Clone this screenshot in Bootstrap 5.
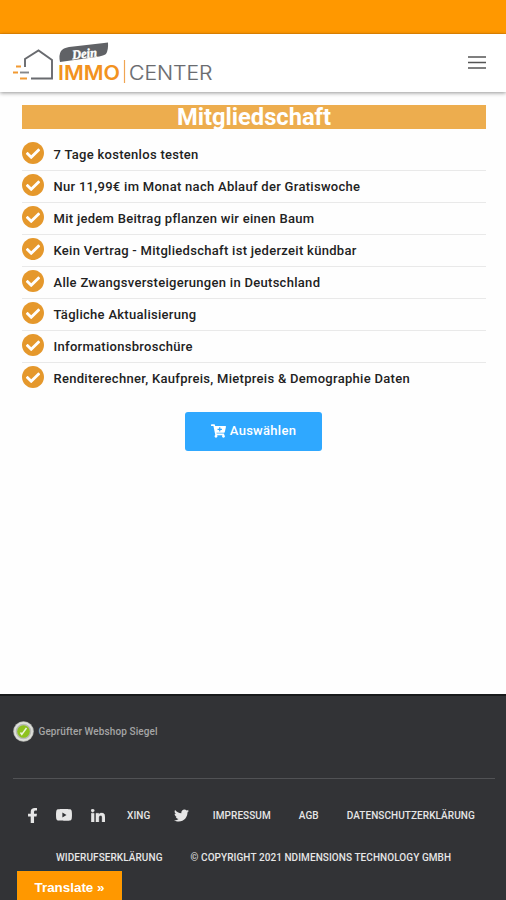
<!DOCTYPE html>
<html lang="de">
<head>
<meta charset="utf-8">
<meta name="viewport" content="width=device-width, initial-scale=1">
<title>Dein Immo Center – Mitgliedschaft</title>
<link href="https://cdn.jsdelivr.net/npm/bootstrap@5.3.0/dist/css/bootstrap.min.css" rel="stylesheet">
<script src="https://cdn.jsdelivr.net/npm/bootstrap@5.3.0/dist/js/bootstrap.bundle.min.js" defer></script>
<style>
body{font-family:Roboto,"Liberation Sans",sans-serif;color:#222;height:900px;overflow:hidden;background:#fefefe}
.topbar{height:34px;background:#ff9800;border-bottom:1px solid #f08c00}
.site-nav{height:58px;padding:0 20px 0 12px;background:#fff;box-shadow:0 1px 4px rgba(0,0,0,.42)}
.site-nav .navbar-toggler{width:18px;height:14px;margin-top:-3px}
.offer{padding:13px 20px 0 22px}
.offer-title{height:24px;line-height:25px;font-size:23.7px;font-weight:700;background:#edad4e}
.benefits{padding-top:10px}
.benefits .list-group-item{height:31.95px;padding:0;border-width:0 0 1px;border-color:#e9e9e9;background:none;color:#222;font-size:13px;font-weight:500;line-height:16px;letter-spacing:.29px}
.benefits .list-group-item:last-child{border:0}
.benefits svg{width:22px;height:22px;margin:0 9.5px 3px 0;flex:none}
.benefits span{white-space:nowrap;padding-top:1px}
.btn-choose{width:137px;height:39px;margin-top:17px;margin-right:1px;background:#2fa8ff;color:#fff;font-size:13px;font-weight:500;letter-spacing:.28px;border-radius:3px;padding:0}
.btn-choose:hover{background:#1c98f0;color:#fff}
.site-footer{height:206px;background:#323336;border-top:2px solid #191b1c;padding:24px 11px 0 13px;color:#e6e6e6}
.seal{height:22px;font-size:10px;font-weight:500;color:#a5a5a5;letter-spacing:.1px}
.divide{height:1px;background:#515255;margin-top:36px}
.foot-links{font-size:10px;font-weight:500;line-height:14px;white-space:nowrap;letter-spacing:.07px}
.foot-links a{color:#e6e6e6;text-decoration:none}
.foot-links svg{display:block}
.row-a{padding-left:15px;height:16px;margin-top:29px}
.row-a svg{margin-top:-2px}
.row-b{padding-left:43px;height:16px;margin-top:26px}
.translate{left:17px;bottom:0;width:105px;height:29px;background:#ff9800;color:#fff;font:700 13.4px/33px "Liberation Sans",sans-serif;box-shadow:0 0 0 1px #223744}
</style>
</head>
<body class="d-flex flex-column position-relative">
<div class="topbar flex-shrink-0"></div>
<nav class="site-nav navbar flex-shrink-0 d-flex justify-content-between align-items-center position-relative">
  <a class="navbar-brand p-0 m-0" href="#" aria-label="Dein Immo Center">
    <svg class="d-block" width="202" height="50" viewBox="12 38 202 50">
      <path d="M25 67V59L38.500 50.500L52 60V78.500H31" fill="none" stroke="#696b6f" stroke-width="1.900"/>
      <path d="M16 66.500H21M13 72.500H18M20 78.500H27" stroke="#f29a32" stroke-width="1.900"/>
      <path d="M20 72.500H29" stroke="#85878a" stroke-width="1.900"/>
      <path d="M61 51Q63 48 69 47L104 43L108 42.500Q108.500 50 106 54Q103 56 96 57L60 62Q58.500 55 61 51Z" fill="#606266"/>
      <text x="72" y="58" transform="rotate(-6 84 54)" textLength="25" lengthAdjust="spacingAndGlyphs" font-family="Liberation Serif,serif" font-size="13" font-weight="700" font-style="italic" fill="#fff" stroke="#fff" stroke-width=".4">Dein</text>
      <text x="58" y="79.500" textLength="62" lengthAdjust="spacingAndGlyphs" font-family="Inter,sans-serif" font-size="20" font-weight="600" fill="#f29220">IMMO</text>
      <path d="M124.500 60V83" stroke="#f0a552" stroke-width="1.200"/>
      <text x="129" y="79.500" textLength="83.500" lengthAdjust="spacingAndGlyphs" font-family="Inter,sans-serif" font-size="20" font-weight="300" fill="#696b6f" stroke="#696b6f" stroke-width=".2">CENTER</text>
    </svg>
  </a>
  <button class="navbar-toggler p-0 border-0 d-flex rounded-0" type="button" aria-label="Menü">
    <svg width="18" height="14"><path d="M0 2H18M0 7.500H18M0 13H18" stroke="#555" stroke-width="1.700"/></svg>
  </button>
</nav>
<svg class="d-none">
  <symbol id="check" viewBox="8 8 496 496"><path fill="#e5982c" d="M504 256c0 136.967-111.033 248-248 248S8 392.967 8 256 119.033 8 256 8s248 111.033 248 248z"/><path fill="#fff" d="M227.314 387.314l184-184c6.248-6.248 6.248-16.379 0-22.627l-22.627-22.627c-6.248-6.249-16.379-6.249-22.628 0L216 308.118l-70.059-70.059c-6.248-6.248-16.379-6.248-22.628 0l-22.627 22.627c-6.248 6.248-6.248 16.379 0 22.627l104 104c6.249 6.249 16.379 6.249 22.628.001z"/></symbol>
</svg>
<main class="offer flex-grow-1">
  <h1 class="offer-title text-white text-center m-0">Mitgliedschaft</h1>
  <ul class="benefits list-group list-group-flush">
    <li class="list-group-item d-flex align-items-center"><svg><use href="#check"/></svg><span>7 Tage kostenlos testen</span></li>
    <li class="list-group-item d-flex align-items-center"><svg><use href="#check"/></svg><span>Nur 11,99€ im Monat nach Ablauf der Gratiswoche</span></li>
    <li class="list-group-item d-flex align-items-center"><svg><use href="#check"/></svg><span>Mit jedem Beitrag pflanzen wir einen Baum</span></li>
    <li class="list-group-item d-flex align-items-center"><svg><use href="#check"/></svg><span>Kein Vertrag - Mitgliedschaft ist jederzeit kündbar</span></li>
    <li class="list-group-item d-flex align-items-center"><svg><use href="#check"/></svg><span>Alle Zwangsversteigerungen in Deutschland</span></li>
    <li class="list-group-item d-flex align-items-center"><svg><use href="#check"/></svg><span>Tägliche Aktualisierung</span></li>
    <li class="list-group-item d-flex align-items-center"><svg><use href="#check"/></svg><span>Informationsbroschüre</span></li>
    <li class="list-group-item d-flex align-items-center"><svg><use href="#check"/></svg><span>Renditerechner, Kaufpreis, Mietpreis &amp; Demographie Daten</span></li>
  </ul>
  <div class="text-center">
    <a class="btn btn-choose border-0 d-inline-flex align-items-center justify-content-center" href="#">
      <svg class="me-1" width="15" height="14" viewBox="0 0 576 512" fill="#fff"><path d="M504.717 320H211.572l6.545 32h268.418c15.401 0 26.816 14.301 23.403 29.319l-5.517 24.276C523.112 414.668 536 433.828 536 456c0 31.202-25.519 56.444-56.824 55.994-29.823-.429-54.350-24.631-55.155-54.447-.440-16.287 6.085-31.049 16.803-41.548H231.176C241.553 426.165 248 440.326 248 456c0 31.813-26.528 57.431-58.670 55.938-28.540-1.325-51.751-24.385-53.251-52.917-1.158-22.034 10.436-41.455 28.051-51.586L93.883 64H24C10.745 64 0 53.255 0 40V24C0 10.745 10.745 0 24 0h102.529c11.401 0 21.228 8.021 23.513 19.190L159.208 64H551.991c15.401 0 26.816 14.301 23.403 29.319l-47.273 208C525.637 312.246 515.923 320 504.717 320zM408 168h-48v-40c0-8.837-7.163-16-16-16h-16c-8.837 0-16 7.163-16 16v40h-48c-8.837 0-16 7.163-16 16v16c0 8.837 7.163 16 16 16h48v40c0 8.837 7.163 16 16 16h16c8.837 0 16-7.163 16-16v-40h48c8.837 0 16-7.163 16-16v-16c0-8.837-7.163-16-16-16z"/></svg>
      <span>Auswählen</span>
    </a>
  </div>
</main>
<footer class="site-footer flex-shrink-0">
  <div class="seal d-flex align-items-center">
    <svg width="21" height="21" viewBox="0 0 21 21" style="margin-right:4.500px"><circle cx="10.500" cy="10.500" r="10.300" fill="#b9bbb7"/><circle cx="10.500" cy="10.500" r="8.600" fill="none" stroke="#dfe1dc" stroke-width="1.600"/><circle cx="10.500" cy="10.500" r="6.300" fill="#8ec21f"/><path d="M7.500 11.500L8.800 13.500L13.500 7" fill="none" stroke="#edf5dc" stroke-width="1.500"/></svg>
    <span>Geprüfter Webshop Siegel</span>
  </div>
  <div class="divide"></div>
  <div class="foot-links row-a d-flex align-items-center">
    <a href="#" aria-label="Facebook"><svg width="9" height="15" viewBox="22 0 272 512" preserveAspectRatio="none" fill="#e6e6e6"><path d="M279.140 288l14.220-92.660h-88.910v-60.130c0-25.350 12.420-50.060 52.240-50.060h40.420V6.260S260.430 0 225.360 0c-73.220 0-121.080 44.380-121.080 124.720v70.620H22.890V288h81.390v224h100.170V288z"/></svg></a>
    <a href="#" aria-label="YouTube" style="margin-left:19px"><svg width="16" height="12" viewBox="14 64 548 385" preserveAspectRatio="none" fill="#e6e6e6"><path d="M549.655 124.083c-6.281-23.650-24.787-42.276-48.284-48.597C458.781 64 288 64 288 64S117.220 64 74.629 75.486c-23.497 6.322-42.003 24.947-48.284 48.597-11.412 42.867-11.412 132.305-11.412 132.305s0 89.438 11.412 132.305c6.281 23.650 24.787 41.500 48.284 47.821C117.220 448 288 448 288 448s170.780 0 213.371-11.486c23.497-6.321 42.003-24.171 48.284-47.821 11.412-42.867 11.412-132.305 11.412-132.305s0-89.438-11.412-132.305zm-317.510 213.508V175.185l142.739 81.205-142.739 81.201z"/></svg></a>
    <a href="#" aria-label="LinkedIn" style="margin-left:19px"><svg width="14" height="13" viewBox="0 0 448 448" preserveAspectRatio="none" fill="#e6e6e6" stroke="#e6e6e6" stroke-width="12"><path d="M100.280 448H7.400V148.900h92.880zM53.790 108.100C24.090 108.100 0 83.500 0 53.800a53.790 53.790 0 0 1 107.580 0c0 29.700-24.100 54.300-53.790 54.300zM447.900 448h-92.680V302.400c0-34.700-.7-79.200-48.290-79.200-48.290 0-55.690 37.700-55.690 76.700V448h-92.780V148.900h89.080v40.800h1.300c12.400-23.500 42.690-48.300 87.880-48.300 94 0 111.280 61.900 111.280 142.300V448z"/></svg></a>
    <a href="#" style="margin-left:22px">XING</a>
    <a href="#" aria-label="Twitter" style="margin-left:23.500px"><svg width="15" height="13" viewBox="0 48 512 416" fill="#e6e6e6"><path d="M459.370 151.716c.325 4.548.325 9.097.325 13.645 0 138.720-105.583 298.558-298.558 298.558-59.452 0-114.680-17.219-161.137-47.106 8.447.974 16.568 1.299 25.340 1.299 49.055 0 94.213-16.568 130.274-44.832-46.132-.975-84.792-31.188-98.112-72.772 6.498.974 12.995 1.624 19.818 1.624 9.421 0 18.843-1.300 27.614-3.573-48.081-9.747-84.143-51.980-84.143-102.985v-1.299c13.969 7.797 30.214 12.670 47.431 13.319-28.264-18.843-46.781-51.005-46.781-87.391 0-19.492 5.197-37.360 14.294-52.954 51.655 63.675 129.300 105.258 216.365 109.807-1.624-7.797-2.599-15.918-2.599-24.040 0-57.828 46.782-104.934 104.934-104.934 30.213 0 57.502 12.670 76.670 33.137 23.715-4.548 46.456-13.320 66.599-25.340-7.798 24.366-24.366 44.833-46.132 57.827 21.117-2.273 41.584-8.122 60.426-16.243-14.292 20.791-32.161 39.308-52.628 54.253z"/></svg></a>
    <a href="#" style="margin-left:24px">IMPRESSUM</a>
    <a href="#" style="margin-left:28px">AGB</a>
    <a href="#" style="margin-left:28px">DATENSCHUTZERKLÄRUNG</a>
  </div>
  <div class="foot-links row-b d-flex align-items-center">
    <a href="#">WIDERUFSERKLÄRUNG</a>
    <a href="#" style="margin-left:28px">© COPYRIGHT 2021 NDIMENSIONS TECHNOLOGY GMBH</a>
  </div>
</footer>
<a class="translate position-absolute text-center text-decoration-none" href="#">Translate »</a>
</body>
</html>
